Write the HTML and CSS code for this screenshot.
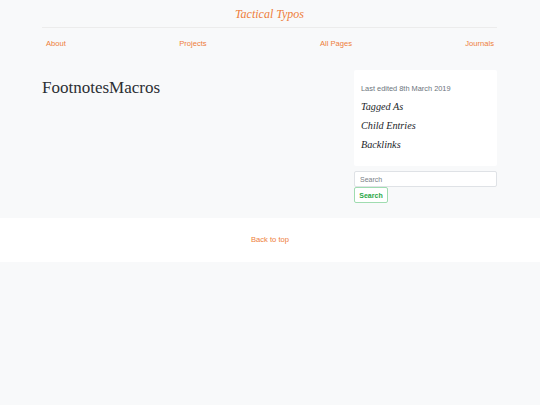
FILE: index.html
```html
<!DOCTYPE html>
<html>
<head>
<meta charset="utf-8">
<link rel="stylesheet" href="styles.css">
</head>
<body>
<div class="page">
  <header class="container header">
    <div class="brand"><a href="#">Tactical Typos</a></div>
    <nav class="nav">
      <a href="#">About</a>
      <a href="#">Projects</a>
      <a href="#">All Pages</a>
      <a href="#">Journals</a>
    </nav>
  </header>
  <main class="container main">
    <div class="content">
      <h1 class="title">FootnotesMacros</h1>
    </div>
    <aside class="sidebar">
      <div class="card">
        <p class="edited">Last edited 8th March 2019</p>
        <h4 class="card-h">Tagged As</h4>
        <h4 class="card-h">Child Entries</h4>
        <h4 class="card-h">Backlinks</h4>
      </div>
      <form class="search">
        <input class="search-input" type="text" placeholder="Search">
        <button class="search-btn" type="button">Search</button>
      </form>
    </aside>
  </main>
</div>
<footer class="footer">
  <a href="#">Back to top</a>
</footer>
</body>
</html>
```
FILE: styles.css
```css
html, body {
  margin: 0;
  padding: 0;
  background: #f8f9fa;
  font-family: "Liberation Sans", Arial, sans-serif;
}
a {
  color: #ee7d3b;
  text-decoration: none;
}
.container {
  width: 455px;
  margin: 0 0 0 42px;
}
.page {
  padding-bottom: 15px;
}
.header {
  padding-top: 6px;
}
.brand {
  text-align: center;
  font-family: "Liberation Serif", "Times New Roman", serif;
  font-style: italic;
  font-size: 12px;
  line-height: 16px;
  padding-bottom: 5px;
  border-bottom: 1px solid #ececec;
}
.nav {
  display: flex;
  justify-content: space-between;
  padding: 11px 3px 0 4px;
  font-size: 7.6px;
  line-height: 10px;
}
.main {
  display: flex;
  justify-content: space-between;
  margin-top: 21px;
}
.title {
  margin: 7px 0 0;
  font-family: "Liberation Serif", "Times New Roman", serif;
  font-weight: normal;
  font-size: 17px;
  line-height: 22px;
  color: #2b2f33;
}
.sidebar {
  width: 143px;
}
.card {
  background: #fff;
  border-radius: 2px;
  padding: 14px 7px 9px;
}
.edited {
  margin: 0 0 6px;
  font-size: 7.4px;
  line-height: 10px;
  color: #6c757d;
}
.card-h {
  margin: 0 0 6px;
  font-family: "Liberation Serif", "Times New Roman", serif;
  font-style: italic;
  font-weight: normal;
  font-size: 10.2px;
  line-height: 13px;
  color: #212529;
}
.search {
  margin-top: 5px;
  display: flex;
  flex-direction: column;
  align-items: flex-start;
}
.search-input {
  box-sizing: border-box;
  width: 143px;
  height: 16px;
  margin: 0;
  padding: 0 5px;
  border: 1px solid #dfe2e6;
  border-radius: 2px;
  background: #fff;
  font-family: "Liberation Sans", Arial, sans-serif;
  font-size: 7px;
  outline: none;
}
.search-input::placeholder {
  color: #7a8087;
}
.search-btn {
  box-sizing: border-box;
  height: 16px;
  width: 34px;
  padding: 0;
  margin: 0;
  border: 1px solid #9fdcb0;
  border-radius: 2px;
  background: #fff;
  color: #28a745;
  font-family: "Liberation Sans", Arial, sans-serif;
  font-weight: bold;
  font-size: 7px;
}
.footer {
  background: #fff;
  text-align: center;
  padding: 17px 0;
  font-size: 7.6px;
  line-height: 10px;
}
```
